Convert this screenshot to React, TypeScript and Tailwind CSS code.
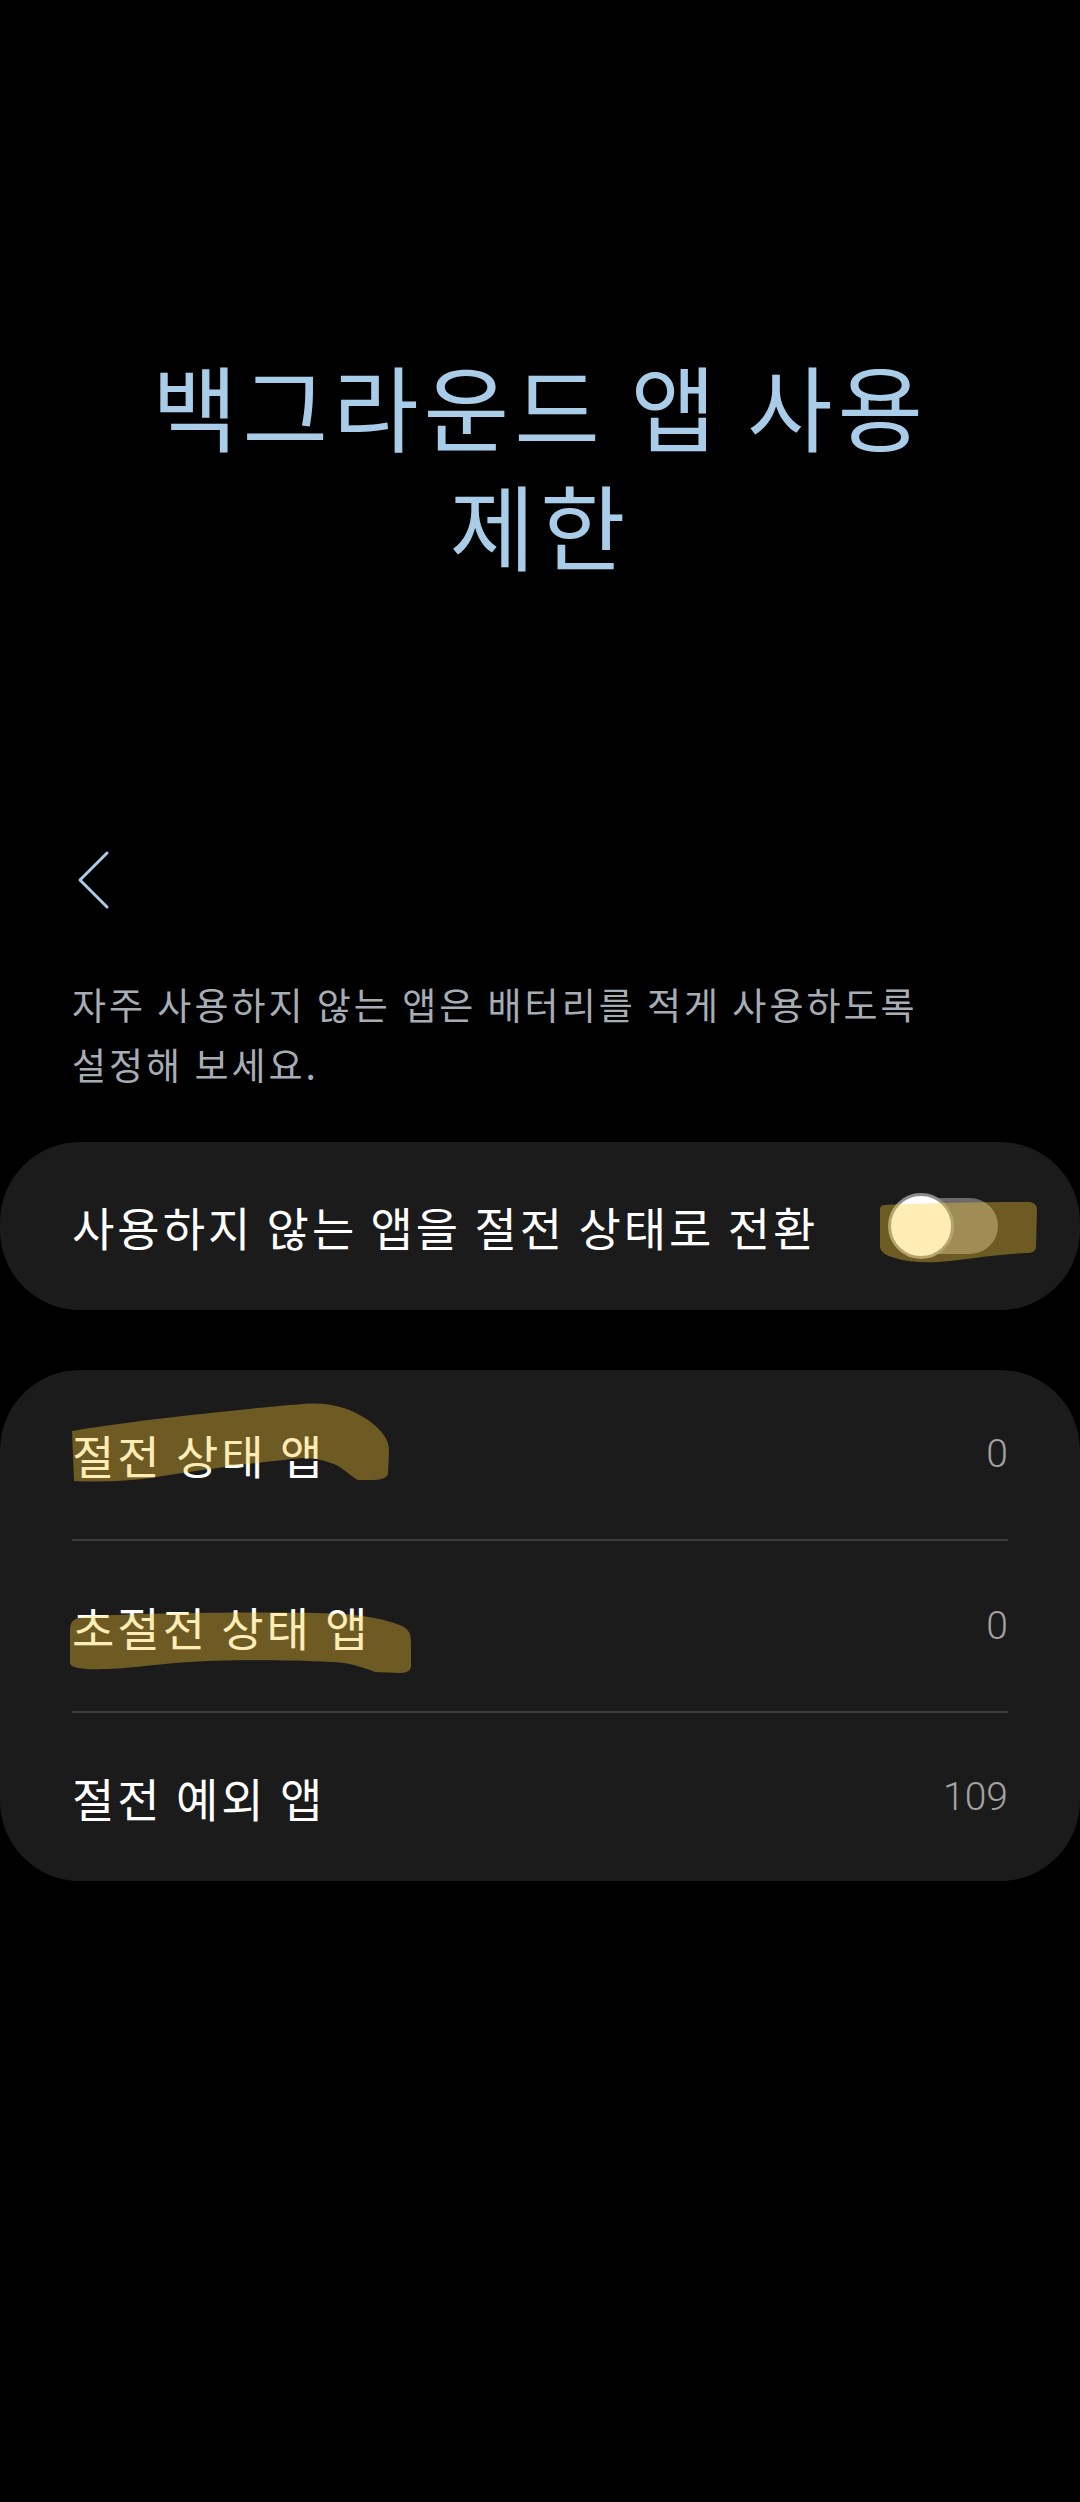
import React from "react";

const HL = "rgba(255,205,50,0.36)";

function Highlight({ d, h }: { d: string; h: number }) {
  return (
    <svg
      className="pointer-events-none absolute left-0 top-0 w-[1080px]"
      style={{ height: h }}
      viewBox={`0 0 1080 ${h}`}
    >
      <path d={d} fill={HL} />
    </svg>
  );
}

function Row({
  label,
  value,
  h,
  mark,
}: {
  label: string;
  value: string;
  h: string;
  mark?: string;
}) {
  return (
    <div className={`relative flex items-center justify-between px-[72px] ${h}`}>
      <span className="text-[46px] tracking-[3px] text-white">{label}</span>
      <span className="font-['Roboto',sans-serif] text-[39px] font-light text-[#a3a3a3]">
        {value}
      </span>
      {mark && <Highlight d={mark} h={170} />}
    </div>
  );
}

export default function App() {
  return (
    <div className="min-h-[2502px] w-[1080px] bg-black font-['Noto_Sans_CJK_KR',sans-serif]">
      <h1 className="flex flex-col items-center pt-[345px] text-[93px] font-normal tracking-[5px] text-[#a9cce8]">
        <span className="flex h-[119px] items-center leading-[108px]">백그라운드 앱 사용</span>
        <span className="flex h-[119px] items-center leading-[108px]">제한</span>
      </h1>

      <div className="mt-[268px] pl-[76px]">
        <svg width="34" height="58" viewBox="0 0 34 58" fill="none">
          <path
            d="M31 2 L4 29 L31 56"
            stroke="#a9cce8"
            strokeWidth="3"
            strokeLinecap="round"
            strokeLinejoin="round"
          />
        </svg>
      </div>

      <p className="mt-[65px] pl-[72px] text-[37px] leading-[60px] tracking-[3px] text-[#a7adb5]">
        자주 사용하지 않는 앱은 배터리를 적게 사용하도록
        <br />
        설정해 보세요.
      </p>

      <div className="relative mt-[48px] flex h-[168px] items-center justify-between rounded-[80px] bg-[#1b1b1b] pl-[72px] pr-[82px]">
        <span className="text-[46px] tracking-[3px] text-white">사용하지 않는 앱을 절전 상태로 전환</span>
        <div className="relative flex h-[66px] w-[110px] items-center">
          <div className="ml-[12px] h-[56px] w-[98px] rounded-full bg-[#6a6a6a]" />
          <div className="absolute left-0 top-0 h-[66px] w-[66px] rounded-full border-[3px] border-[#8e8e8e] bg-white" />
        </div>
        <Highlight
          h={168}
          d="M884 63 C930 61 990 60 1030 60 Q1037 61 1037 68 L1036 106 Q1035 111 1027 111 C1000 112 975 116 950 119 C930 121 910 121 895 116 Q882 113 880 106 L880 68 Q880 63 884 63 Z"
        />
      </div>

      <div className="mt-[60px] rounded-[80px] bg-[#1b1b1b]">
        <Row
          label="절전 상태 앱"
          value="0"
          h="h-[169px]"
          mark="M72 61 C120 52 250 38 303 34 C330 32 350 38 368 50 C382 60 389 70 389 80 L388 104 Q386 110 372 110 L358 110 C350 106 342 96 331 93 C320 89 310 88 303 88 C260 92 200 100 150 108 C120 112 90 112 74 111 Z"
        />
        <div className="mx-[72px] h-[2px] bg-[#3d3d3d]" />
        <Row
          label="초절전 상태 앱"
          value="0"
          h="h-[170px]"
          mark="M70 90 C70 80 74 76 90 75 C150 72 280 70 344 73 C370 75 392 80 404 86 Q411 90 411 100 L411 126 Q410 132 399 132 L375 131 C360 125 345 121 331 121 C290 119 240 119 207 120 C160 122 130 128 103 128 C85 129 70 127 70 122 Z"
        />
        <div className="mx-[72px] h-[2px] bg-[#3d3d3d]" />
        <Row label="절전 예외 앱" value="109" h="h-[168px]" />
      </div>
    </div>
  );
}
